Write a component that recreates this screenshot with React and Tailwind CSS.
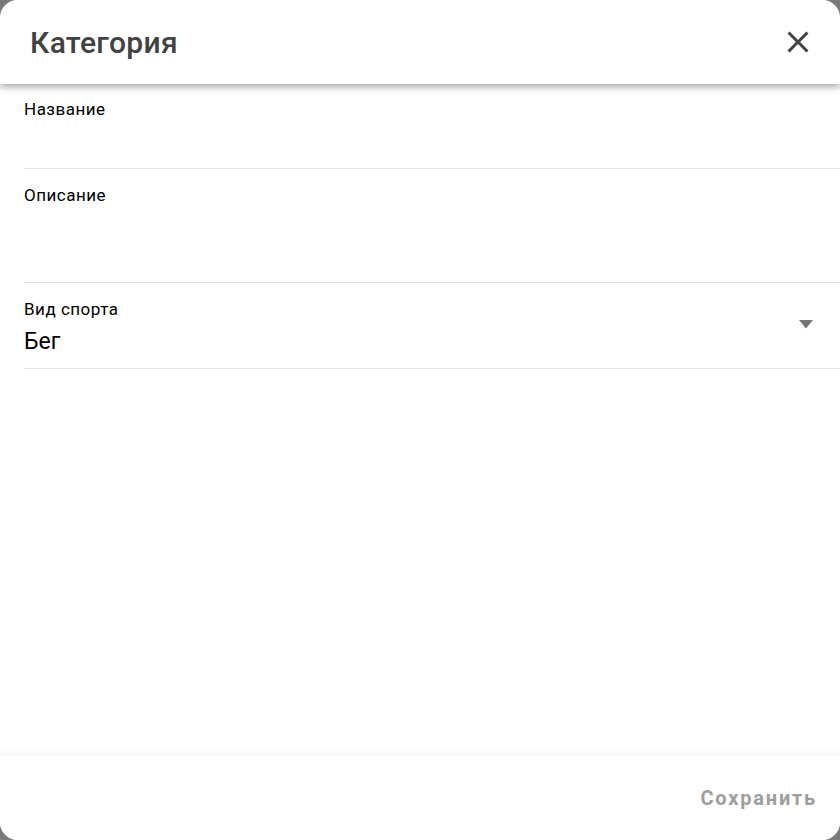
import React from "react";

export default function App() {
  return (
    <div className="h-[840px] w-[840px] bg-[#7a7a7a]" style={{ fontFamily: "Roboto, 'Noto Sans', sans-serif" }}>
      <div className="h-full w-full rounded-[18px] bg-white flex flex-col overflow-hidden">
        <div className="relative z-10 h-[84px] shrink-0 flex items-center justify-between pl-[30px] pr-[24px] bg-white shadow-[0_3px_7px_rgba(0,0,0,0.35)]">
          <div className="text-[30px] font-medium text-[#424242] tracking-[0.3px]">Категория</div>
          <svg width="36" height="36" viewBox="0 0 24 24" className="text-[#424242]">
            <path d="M19 6.41 17.59 5 12 10.59 6.41 5 5 6.41 10.59 12 5 17.59 6.41 19 12 13.41 17.59 19 19 17.59 13.41 12z" fill="currentColor" />
          </svg>
        </div>
        <div className="flex-1 flex flex-col pl-6">
          <div className="pt-4 border-b border-[#e0e0e0]">
            <div className="text-[17px] leading-[19px] tracking-[0.5px] text-black">Название</div>
            <div className="h-[49px]" />
          </div>
          <div className="pt-[17px] border-b border-[#e0e0e0]">
            <div className="text-[17px] leading-[19px] tracking-[0.5px] text-black">Описание</div>
            <div className="h-[77px]" />
          </div>
          <div className="relative pt-[17px] border-b border-[#e0e0e0]">
            <div className="text-[17px] leading-[19px] tracking-[0.5px] text-black">Вид спорта</div>
            <div className="mt-[8px] h-[30px] pb-[11px] box-content text-[23px] leading-[30px] text-black">Бег</div>
            <svg className="absolute right-[27px] top-[37px]" width="14" height="9" viewBox="0 0 14 9">
              <path d="M0 0 L14 0 L7 8.5 Z" fill="#757575" />
            </svg>
          </div>
        </div>
        <div className="h-[84px] shrink-0 flex items-center justify-end pr-[23px] bg-white shadow-[0_-4px_8px_rgba(0,0,0,0.04)]">
          <div className="text-[20px] font-bold text-[#9e9e9e] tracking-[1.8px]">Сохранить</div>
        </div>
      </div>
    </div>
  );
}
